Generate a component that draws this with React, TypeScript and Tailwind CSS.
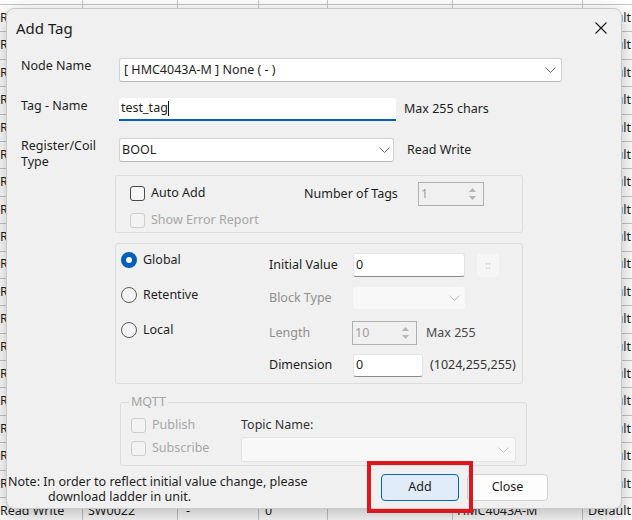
import React from 'react';

// chevron used by the combo boxes
const Chevron: React.FC<{ className?: string }> = ({ className }) => (
  <svg width="11" height="6" viewBox="0 0 11 6" className={className}>
    <path d="M0.5 0.5L5.5 5.5L10.5 0.5" fill="none" stroke="currentColor" strokeWidth="1" />
  </svg>
);

const SpinArrows: React.FC = () => (
  <div className="flex w-[22px] flex-col items-center justify-center gap-[4px] text-[#b4b4b4]">
    <svg width="7" height="4" viewBox="0 0 7 4"><path d="M0 4L3.5 0L7 4Z" fill="currentColor" /></svg>
    <svg width="7" height="4" viewBox="0 0 7 4"><path d="M0 0L3.5 4L7 0Z" fill="currentColor" /></svg>
  </div>
);

const CheckBox: React.FC<{ label: string; disabled?: boolean }> = ({ label, disabled }) => (
  <div className="flex h-[16px] items-center">
    <span
      className={`h-[15px] w-[15px] rounded-[3px] border ${
        disabled ? 'border-[#cdcdcd] bg-[#f3f3f3]' : 'border-[#4a4a4a] bg-[#f6f6f6]'
      }`}
    />
    <span className={`ml-[6px] ${disabled ? 'text-[#a6a6a6]' : 'text-[#1e1e1e]'}`}>{label}</span>
  </div>
);

const Radio: React.FC<{ label: string; checked?: boolean }> = ({ label, checked }) => (
  <div className="flex h-[16px] items-center">
    {checked ? (
      <span className="flex h-[16px] w-[16px] items-center justify-center rounded-full bg-[#005fb8]">
        <span className="h-[6px] w-[6px] rounded-full bg-white" />
      </span>
    ) : (
      <span className="h-[16px] w-[16px] rounded-full border border-[#5c5c5c] bg-[#f4f4f4]" />
    )}
    <span className="ml-[6px] text-[#1e1e1e]">{label}</span>
  </div>
);

// only the last row of the sheet shows below the dialog, the rest is covered
const rows = Array.from({ length: 20 }, (_, i) => ({ sw: `SW00${String(i + 3).padStart(2, '0')}`, first: i === 0, last: i === 19 }));

export default function App() {
  return (
    <div className="relative h-[520px] w-[632px] overflow-hidden bg-white font-['Noto_Sans',sans-serif] text-[12.5px] text-[#1e1e1e]">
      {/* spreadsheet behind the dialog */}
      <div className="-mt-[23.4px]">
        {rows.map((r) => (
          <div
            key={r.sw}
            className="grid h-[27.4px] grid-cols-[83px_95px_81px_69px_125px_130px_49px] border-t border-[#c6c6c6] leading-none"
          >
            <div className="flex items-center overflow-hidden whitespace-nowrap border-r border-[#c6c6c6]">{!r.first && 'Read Write'}</div>
            <div className="flex items-center overflow-hidden whitespace-nowrap border-r border-[#c6c6c6] pl-[5px]">{r.last && r.sw}</div>
            <div className="flex items-center border-r border-[#c6c6c6] pl-[8px]">{r.last && '-'}</div>
            <div className="flex items-center border-r border-[#c6c6c6] pl-[6px]">{r.last && '0'}</div>
            <div className="border-r border-[#c6c6c6]" />
            <div className="flex items-center overflow-hidden whitespace-nowrap border-r border-[#c6c6c6] pl-[4px]">{r.last && 'HMC4043A-M'}</div>
            <div className="flex items-center overflow-hidden whitespace-nowrap pl-[5px]">{!r.first && 'Default Tag'}</div>
          </div>
        ))}
      </div>

      {/* dialog */}
      <div className="absolute left-[6px] top-[8px] flex h-[501px] w-[616px] flex-col rounded-[8px] border border-[#c9c9c9] bg-[#f0f0f0] shadow-[0_6px_20px_rgba(0,0,0,0.28)]">
        <div className="flex h-[38px] items-center justify-between pl-[9px] pr-[14px]">
          <span className="text-[15px] text-[#1b1b1b]">Add Tag</span>
          <svg width="12" height="12" viewBox="0 0 12 12" className="text-[#1b1b1b]">
            <path d="M0.5 0.5L11.5 11.5M11.5 0.5L0.5 11.5" stroke="currentColor" strokeWidth="1.1" />
          </svg>
        </div>

        <div className="mt-[11px] pl-[14px]">
          <div className="flex">
            <div className="w-[98px] leading-[16px]">Node Name</div>
            <div className="flex h-[24px] w-[443px] items-center justify-between rounded-[3px] border border-[#d2d2d2] border-b-[#b8b8b8] bg-white pl-[4px] pr-[5px]">
              <span>[ HMC4043A-M ] None ( - )</span>
              <Chevron className="text-[#6a6a6a]" />
            </div>
          </div>

          <div className="mt-[16px] flex">
            <div className="w-[98px] leading-[16px]">Tag - Name</div>
            <div className="flex h-[23px] w-[277px] items-center rounded-t-[3px] border-b-2 border-[#005fb8] bg-white pl-[2px]">
              <span>test_tag</span>
              <span className="h-[15px] w-px bg-[#111]" />
            </div>
            <span className="ml-[8px] flex h-[23px] items-center">Max 255 chars</span>
          </div>

          <div className="mt-[17px] flex">
            <div className="w-[98px] leading-[16px]">
              Register/Coil
              <br />
              Type
            </div>
            <div className="flex h-[24px] w-[275px] items-center justify-between rounded-[3px] border border-[#d2d2d2] border-b-[#b8b8b8] bg-white pl-[2px] pr-[3px]">
              <span>BOOL</span>
              <Chevron className="text-[#6a6a6a]" />
            </div>
            <span className="ml-[13px] flex h-[24px] items-center">Read Write</span>
          </div>

          {/* auto add group */}
          <div className="ml-[94px] mt-[5px] flex h-[58px] w-[408px] rounded-[3px] border border-[#dcdcdc]">
            <div className="flex w-[188px] flex-col gap-[11px] pl-[14px] pt-[9px]">
              <CheckBox label="Auto Add" />
              <CheckBox label="Show Error Report" disabled />
            </div>
            <div className="flex items-start pt-[6px]">
              <span className="flex h-[24px] w-[114px] items-center">Number of Tags</span>
              <div className="flex h-[24px] w-[66px] border border-[#b0b0b0] bg-[#f0f0f0]">
                <span className="flex flex-1 items-center pl-[2px] text-[#a0a0a0]">1</span>
                <SpinArrows />
              </div>
            </div>
          </div>

          {/* scope group */}
          <div className="ml-[94px] mt-[10px] flex h-[141px] w-[408px] rounded-[3px] border border-[#dcdcdc]">
            <div className="flex w-[153px] flex-col gap-[19px] pl-[5px] pt-[8px]">
              <Radio label="Global" checked />
              <Radio label="Retentive" />
              <Radio label="Local" />
            </div>
            <div className="flex flex-col pt-[9px]">
              <div className="flex h-[24px] items-center">
                <span className="w-[84px]">Initial Value</span>
                <div className="flex h-[24px] w-[112px] items-center rounded-[3px] border border-[#e4e4e4] border-b-[#8a8a8a] bg-white pl-[2px]">0</div>
                <div className="ml-[12px] flex h-[23px] w-[22px] items-center justify-center rounded-[3px] bg-[#f6f6f6] text-[10px] leading-none text-[#c4c4c4]">::</div>
              </div>
              <div className="mt-[10px] flex h-[22px] items-center">
                <span className="w-[84px] text-[#8f8f8f]">Block Type</span>
                <div className="flex h-[22px] w-[112px] items-center justify-end rounded-[3px] bg-[#f8f8f8] pr-[5px]">
                  <Chevron className="text-[#c2c2c2]" />
                </div>
              </div>
              <div className="mt-[12px] flex h-[24px] items-center">
                <span className="w-[83px] text-[#8f8f8f]">Length</span>
                <div className="flex h-[24px] w-[65px] border border-[#b0b0b0] bg-[#f0f0f0]">
                  <span className="flex flex-1 items-center pl-[2px] text-[#a0a0a0]">10</span>
                  <SpinArrows />
                </div>
                <span className="ml-[9px] text-[#4a4a4a]">Max 255</span>
              </div>
              <div className="mt-[9px] flex h-[23px] items-center">
                <span className="w-[84px]">Dimension</span>
                <div className="flex h-[23px] w-[70px] items-center rounded-[3px] border border-[#e4e4e4] border-b-[#8a8a8a] bg-white pl-[2px]">0</div>
                <span className="ml-[7px] text-[#333]">(1024,255,255)</span>
              </div>
            </div>
          </div>

          {/* mqtt */}
          <fieldset className="ml-[99px] mt-[10px] w-[407px] rounded-[3px] border border-[#dcdcdc] pb-[3px]">
            <legend className="ml-[8px] px-[2px] leading-[16px] text-[#a4a4a4]">MQTT</legend>
            <div className="flex pt-[7px]">
              <div className="flex w-[120px] flex-col gap-[7px] pl-[10px]">
                <CheckBox label="Publish" disabled />
                <CheckBox label="Subscribe" disabled />
              </div>
              <div className="flex flex-col">
                <span className="leading-[16px] text-[#333]">Topic Name:</span>
                <div className="mt-[4px] flex h-[25px] w-[275px] items-center justify-end rounded-[3px] border border-[#e2e2e2] bg-[#f8f8f8] pr-[6px]">
                  <Chevron className="text-[#c2c2c2]" />
                </div>
              </div>
            </div>
          </fieldset>
        </div>

        <div className="mt-[8px] flex pl-[1px]">
          <div className="w-[373px] text-[12.5px] leading-[15px]">
            <div>Note: In order to reflect initial value change, please</div>
            <div className="pl-[40px]">download ladder in unit.</div>
          </div>
          <button className="flex h-[27px] w-[78px] items-center justify-center rounded-[4px] border border-[#0067c0] bg-[#e0ecf8] text-[#1b1b1b]">
            Add
          </button>
          <button className="ml-[8px] flex h-[27px] w-[81px] items-center justify-center rounded-[4px] border border-[#d0d0d0] bg-[#fdfdfd] text-[#1b1b1b]">
            Close
          </button>
        </div>
      </div>

      {/* red highlight around the Add button */}
      <div className="absolute left-[367px] top-[461px] h-[52px] w-[106px] border-4 border-[#e0161e]" />
    </div>
  );
}
